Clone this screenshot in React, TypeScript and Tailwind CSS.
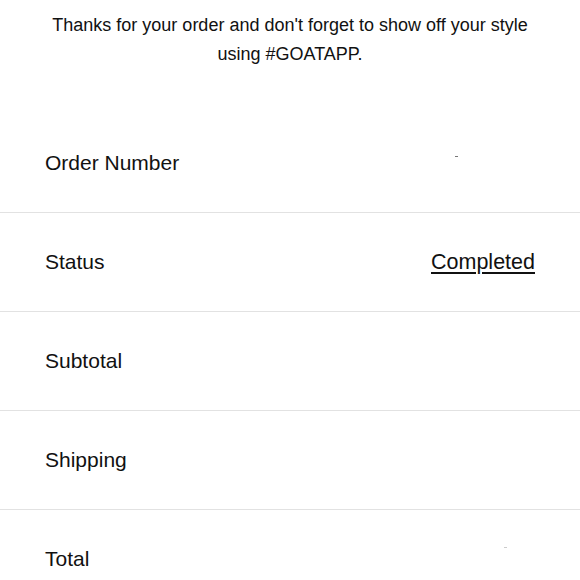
import React from "react";

const rows: { label: string; value?: string; dot?: string }[] = [
  { label: "Order Number", dot: "order" },
  { label: "Status", value: "Completed" },
  { label: "Subtotal" },
  { label: "Shipping" },
  { label: "Total", dot: "total" },
];

export default function App() {
  return (
    <div
      className="w-[580px] h-[580px] overflow-hidden bg-white text-[#111111]"
      style={{ fontFamily: '"Liberation Sans", Arial, sans-serif' }}
    >
      <div className="pt-[11px] px-[30px] text-center text-[18px] leading-[29px] h-[114px]">
        <p>Thanks for your order and don't forget to show off your style</p>
        <p>using #GOATAPP.</p>
      </div>
      <div className="flex flex-col">
        {rows.map((r) => (
          <div
            key={r.label}
            className="relative flex h-[99px] shrink-0 items-center justify-between border-b border-[#e2e2e2] px-[45px] text-[21px]"
          >
            <span>{r.label}</span>
            {r.value && (
              <span className="text-[21.5px] underline decoration-[1.5px] underline-offset-[3px]">
                {r.value}
              </span>
            )}
            {r.dot === "order" && (
              <span className="absolute left-[455px] top-[42px] h-[1px] w-[3px] bg-[#777]" />
            )}
            {r.dot === "total" && (
              <span className="absolute left-[504px] top-[37px] h-[1px] w-[3px] bg-[#ccc]" />
            )}
          </div>
        ))}
      </div>
    </div>
  );
}
